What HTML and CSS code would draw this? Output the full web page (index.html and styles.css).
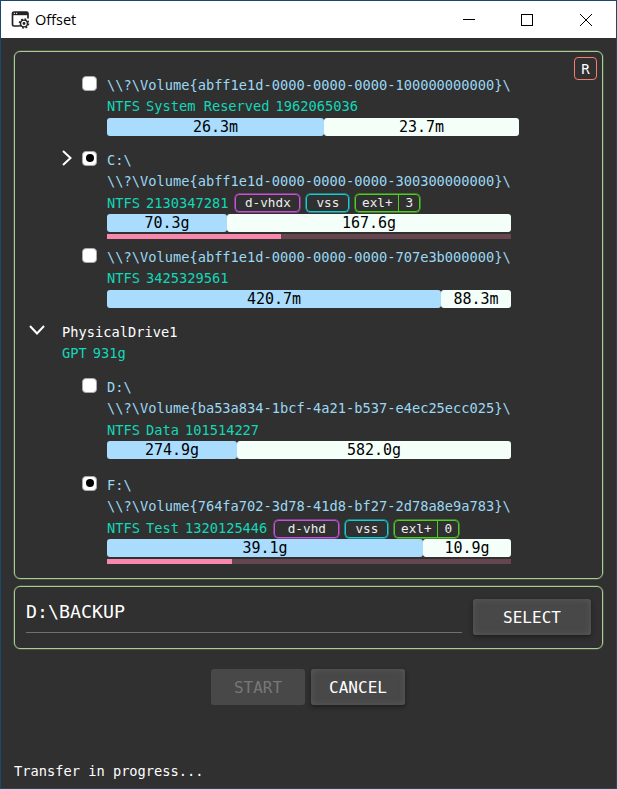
FILE: index.html
```html
<!DOCTYPE html>
<html lang="en">
<head>
<meta charset="utf-8">
<title>Offset</title>
<link rel="stylesheet" href="styles.css">
</head>
<body>
<div class="window">
  <header class="titlebar">
    <svg class="app-icon" width="19" height="18" viewBox="0 0 19 18">
      <path d="M8.500 15H3Q1.500 15 1.500 13.500V2.500Q1.500 1 3 1H15.500Q17 1 17 2.500V7.500" fill="none" stroke="#222" stroke-width="1.700"/>
      <path d="M1.500 1H17V4.200H1.500Z" fill="#222"/>
      <path d="M2.800 2.300H4M5 2.300H6.200" stroke="#fff" stroke-width="1"/>
      <circle cx="13" cy="12.500" r="4.500" fill="#fff" stroke="#222" stroke-width="1.600" stroke-dasharray="1.767 1.767"/>
      <circle cx="13" cy="12.500" r="3.400" fill="#fff" stroke="#222" stroke-width="1.400"/>
      <circle cx="13" cy="12.500" r="1.400" fill="#222"/>
    </svg>
    <span class="title">Offset</span>
    <svg class="controls" width="132" height="14" viewBox="0 0 132 14" fill="none" stroke="#000" shape-rendering="crispEdges">
      <path d="M0 6.500H12M58.500 1.500H69.500V12.500H58.500Z"/>
      <path d="M117 1L129 13M129 1L117 13" shape-rendering="auto"/>
    </svg>
  </header>

  <main class="content">
    <section class="panel drives">
      <button class="refresh">R</button>

      <div class="volume">
        <span></span><span class="check"></span>
        <div class="info wide">
          <div class="path">\\?\Volume{abff1e1d-0000-0000-0000-100000000000}\</div>
          <div class="meta"><span>NTFS</span><span>System Reserved</span><span>1962065036</span></div>
          <div class="bar flush"><span class="used" style="width:217px">26.3m</span><span class="free">23.7m</span></div>
        </div>
      </div>

      <div class="volume">
        <svg class="chevron" width="10" height="16" viewBox="0 0 10 16"><path d="M1 1L8.500 8L1 15"/></svg>
        <span class="check on"></span>
        <div class="info">
          <div class="path">C:\</div>
          <div class="path">\\?\Volume{abff1e1d-0000-0000-0000-300300000000}\</div>
          <div class="meta"><span>NTFS</span><span>2130347281</span><span class="tag format">d-vhdx</span><span class="tag vss">vss</span><span class="tag exclude"><span>exl+</span><b>3</b></span></div>
          <div class="bar flush"><span class="used" style="width:120px">70.3g</span><span class="free">167.6g</span></div>
          <div class="progress"><div style="width:174px"></div></div>
        </div>
      </div>

      <div class="volume after-progress">
        <span></span><span class="check"></span>
        <div class="info">
          <div class="path">\\?\Volume{abff1e1d-0000-0000-0000-707e3b000000}\</div>
          <div class="meta"><span>NTFS</span><span>3425329561</span></div>
          <div class="bar flush"><span class="used" style="width:334px">420.7m</span><span class="free">88.3m</span></div>
        </div>
      </div>

      <div class="drive">
        <svg class="chevron" width="16" height="10" viewBox="0 0 16 10"><path d="M1 1L8 8.500L15 1"/></svg>
        <div>
          <div class="drive-name">PhysicalDrive1</div>
          <div class="meta"><span>GPT</span><span>931g</span></div>
        </div>
      </div>

      <div class="volume">
        <span></span><span class="check"></span>
        <div class="info tall">
          <div class="path">D:\</div>
          <div class="path">\\?\Volume{ba53a834-1bcf-4a21-b537-e4ec25ecc025}\</div>
          <div class="meta"><span>NTFS</span><span>Data</span><span>101514227</span></div>
          <div class="bar flush"><span class="used" style="width:130px">274.9g</span><span class="free">582.0g</span></div>
        </div>
      </div>

      <div class="volume">
        <span></span><span class="check on"></span>
        <div class="info">
          <div class="path">F:\</div>
          <div class="path">\\?\Volume{764fa702-3d78-41d8-bf27-2d78a8e9a783}\</div>
          <div class="meta"><span>NTFS</span><span>Test</span><span>1320125446</span><span class="tag format">d-vhd</span><span class="tag vss">vss</span><span class="tag exclude"><span>exl+</span><b>0</b></span></div>
          <div class="bar tight"><span class="used" style="width:316px">39.1g</span><span class="free">10.9g</span></div>
          <div class="progress"><div style="width:125px"></div></div>
        </div>
      </div>
    </section>

    <section class="panel target">
      <div class="target-path">D:\BACKUP</div>
      <button class="btn select">SELECT</button>
    </section>

    <div class="actions">
      <button class="btn" disabled>START</button>
      <button class="btn">CANCEL</button>
    </div>
  </main>
  <footer class="status">Transfer in progress...</footer>
</div>
</body>
</html>
```
FILE: styles.css
```css
* { box-sizing: border-box; }

body {
  margin: 0;
  background: #303030;
  color: #fff;
  font: 13.7px/21.5px "DejaVu Sans Mono", monospace;
}

button { font-family: inherit; padding: 0; color: #fff; }

.window {
  display: flex;
  flex-direction: column;
  height: 789px;
  border: 1px solid #194a6e;
  overflow: hidden;
}

.titlebar {
  display: flex;
  align-items: center;
  height: 37px;
  flex: none;
  padding: 0 21px 0 10px;
  background: #fff;
  color: #000;
}

.title {
  margin-left: 5px;
  font: 14.5px/20px "Open Sans", sans-serif;
}

.controls { margin-left: auto; }

.content { padding: 13px 13px 0 13px; }

.panel {
  position: relative;
  border: 1px solid #a9cd95;
  border-radius: 6px;
  box-shadow: 0 0 0 0.5px #5d7053;
}

.drives {
  height: 528px;
  padding-top: 22.5px;
}

.refresh {
  position: absolute;
  top: 5px;
  right: 5px;
  width: 23px;
  height: 23px;
  border: 1px solid #f47c70;
  border-radius: 4px;
  background: none;
  font-size: 14px;
  line-height: 20px;
}

.volume {
  display: grid;
  grid-template-columns: 20px 25px 1fr;
  margin-left: 47px;
  padding-bottom: 6px;
}

.info { width: 404px; min-height: 69px; }
.info.wide { width: 412px; }
.info.tall { min-height: 92px; }
.after-progress { padding-top: 1.75px; }

.check {
  display: grid;
  place-items: center;
  width: 15px;
  height: 15px;
  margin-top: 1px;
  border: 1px solid #aaa;
  border-radius: 4px;
  background: #fff;
}

.check.on::after {
  content: "";
  width: 8px;
  height: 8px;
  border-radius: 50%;
  background: #000;
}

.chevron {
  fill: none;
  stroke: #fff;
  stroke-width: 2;
}

.path { height: 21.5px; color: #9bd8f3; white-space: pre; }

.meta {
  display: flex;
  align-items: center;
  gap: 6px;
  height: 21.5px;
  color: #12d8b8;
}

.tag {
  display: flex;
  justify-content: center;
  width: 65px;
  height: 18px;
  border: 1px solid var(--tag);
  border-radius: 4px;
  box-shadow: 0 0 0 0.5px var(--tag);
  font-size: 12.7px;
  line-height: 16px;
  color: #ececec;
}

.tag.format { --tag: #c850da; margin-left: 1px; }
.tag.vss { --tag: #14cdd2; width: 43px; }
.tag.exclude { --tag: #4ecd22; }
.tag.exclude span { flex: 1; text-align: center; }
.tag.exclude b { width: 21px; border-left: 1px solid var(--tag); text-align: center; font-weight: normal; }

.bar {
  display: flex;
  height: 18px;
  color: #000;
  font-size: 15px;
  line-height: 18px;
  text-align: center;
}

.bar.tight { margin-top: -0.75px; }
.bar span { border-radius: 3px; }
.used { background: #aadcfd; }
.free { flex: 1; background: #f4fff9; }

.progress {
  height: 5px;
  margin-top: 2px;
  background: #65464f;
}

.progress div { height: 100%; background: #f888ac; }

.drive {
  display: grid;
  grid-template-columns: 33px 1fr;
  margin-left: 14px;
  padding-bottom: 12px;
}

.drive .chevron { margin-top: 3px; }

.target {
  display: flex;
  height: 63px;
  margin-top: 7px;
  padding: 12px 11px;
}

.target-path {
  width: 436px;
  height: 34px;
  border-bottom: 1px solid #707070;
  font-size: 18.3px;
  line-height: 26px;
}

.btn {
  width: 94px;
  height: 36px;
  border: 0;
  border-radius: 3px;
  background: #484848;
  box-shadow: inset 0 0 6px #5b5b5b, 0 2px 4px #1e1e1e;
  font-size: 16px;
}

.btn.select { width: 118px; margin-left: auto; }
.btn:disabled { color: #777; box-shadow: none; }

.actions {
  display: flex;
  gap: 6px;
  margin: 20px 0 0 197px;
}

.status { margin: auto 0 6px 13px; }
```
